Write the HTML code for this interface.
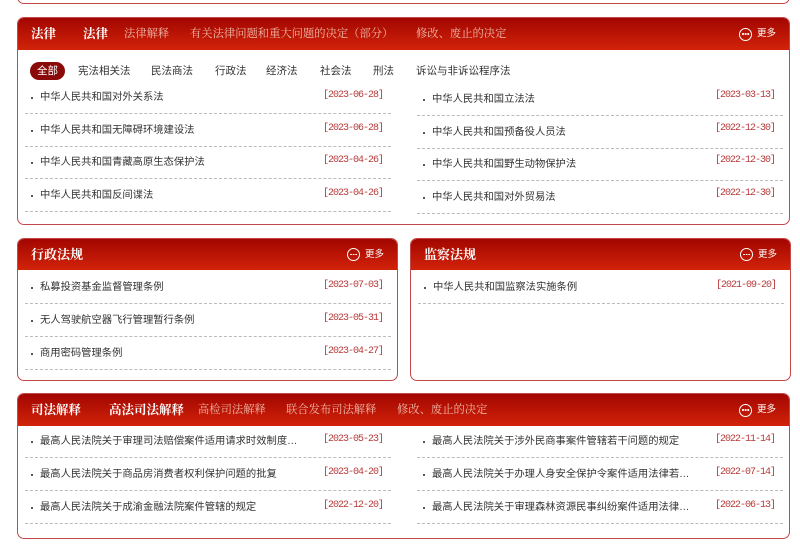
<!DOCTYPE html>
<html><head><meta charset="utf-8"><style>
*{margin:0;padding:0;box-sizing:border-box}
body{width:800px;height:547px;background:#fff;position:relative;overflow:hidden;font-family:"Liberation Sans","Noto Sans CJK SC",sans-serif;font-size:10.3px;color:#333}
.p{position:absolute;border:1px solid #c4484a;border-radius:7px;overflow:hidden;background:#fff}
.h{position:absolute;left:0;right:0;top:0;background:linear-gradient(#a20600,#d2230a);color:#f0b8a8;font-family:"Liberation Serif","Noto Serif CJK SC",serif;font-size:11.3px;white-space:nowrap}
.h span{position:absolute}
.h b{position:absolute;color:#fff;font-weight:bold;font-size:12.5px}
.more{position:absolute;top:0;color:#fff;font-size:9.5px;font-family:"Liberation Sans","Noto Sans CJK SC",sans-serif;height:100%;display:flex;align-items:center}
.more i{display:inline-block;width:13px;height:13px;border:1.3px solid #fff;border-radius:50%;margin-right:5px;position:relative}
.more i:after{content:"";position:absolute;left:2px;top:4.5px;width:1.6px;height:1.6px;background:#fff;box-shadow:2.6px 0 #fff,5.2px 0 #fff;border-radius:50%}
.r{position:absolute;height:33px;border-bottom:1px dashed #bbb;line-height:32px;white-space:nowrap}
.r:before{content:"";position:absolute;left:6px;top:16px;width:2px;height:2px;background:#555}
.r .t{position:absolute;left:15px;top:1px;max-width:270px;overflow:hidden}
.r .d{position:absolute;right:8px;top:-1px;color:#b83a3a;font-family:"Liberation Mono",monospace;font-size:10px;letter-spacing:-1px}
.rr .d{top:-3px}
.tag{position:absolute;top:44px;height:18px;line-height:18px;font-size:10.5px;color:#333}
</style></head><body>
<div class="p" style="left:17px;top:-20px;width:773px;height:24px"></div>

<div class="p" style="left:17px;top:17px;width:773px;height:208px">
<div class="h" style="height:32px;line-height:32px">
<b style="left:13px">法律</b><b style="left:65px">法律</b><span style="left:106px">法律解释</span><span style="left:172px">有关法律问题和重大问题的决定（部分）</span><span style="left:398px">修改、废止的决定</span>
<div class="more" style="right:13px"><i></i>更多</div></div>
<div class="tag" style="left:12px;background:#8a0a0a;color:#fff;border-radius:9px;padding:0 7px">全部</div>
<div class="tag" style="left:60px">宪法相关法</div><div class="tag" style="left:133px">民法商法</div>
<div class="tag" style="left:197px">行政法</div><div class="tag" style="left:248px">经济法</div>
<div class="tag" style="left:302px">社会法</div><div class="tag" style="left:355px">刑法</div>
<div class="tag" style="left:398px">诉讼与非诉讼程序法</div>
<div class="r" style="left:7px;top:63px;width:366px"><span class="t">中华人民共和国对外关系法</span><span class="d">[2023-06-28]</span></div>
<div class="r" style="left:7px;top:96px;width:366px"><span class="t">中华人民共和国无障碍环境建设法</span><span class="d">[2023-06-28]</span></div>
<div class="r" style="left:7px;top:128px;width:366px"><span class="t">中华人民共和国青藏高原生态保护法</span><span class="d">[2023-04-26]</span></div>
<div class="r" style="left:7px;top:161px;width:366px"><span class="t">中华人民共和国反间谍法</span><span class="d">[2023-04-26]</span></div>
<div class="r rr" style="left:399px;top:65px;width:366px"><span class="t">中华人民共和国立法法</span><span class="d">[2023-03-13]</span></div>
<div class="r rr" style="left:399px;top:98px;width:366px"><span class="t">中华人民共和国预备役人员法</span><span class="d">[2022-12-30]</span></div>
<div class="r rr" style="left:399px;top:130px;width:366px"><span class="t">中华人民共和国野生动物保护法</span><span class="d">[2022-12-30]</span></div>
<div class="r rr" style="left:399px;top:163px;width:366px"><span class="t">中华人民共和国对外贸易法</span><span class="d">[2022-12-30]</span></div>
</div>

<div class="p" style="left:17px;top:238px;width:381px;height:143px">
<div class="h" style="height:31px;line-height:31px"><b style="left:13px;font-size:13px">行政法规</b><div class="more" style="right:13px"><i></i>更多</div></div>
<div class="r" style="left:7px;top:32px;width:366px"><span class="t">私募投资基金监督管理条例</span><span class="d">[2023-07-03]</span></div>
<div class="r" style="left:7px;top:65px;width:366px"><span class="t">无人驾驶航空器飞行管理暂行条例</span><span class="d">[2023-05-31]</span></div>
<div class="r" style="left:7px;top:98px;width:366px"><span class="t">商用密码管理条例</span><span class="d">[2023-04-27]</span></div>
</div>

<div class="p" style="left:410px;top:238px;width:381px;height:143px">
<div class="h" style="height:31px;line-height:31px"><b style="left:13px;font-size:13px">监察法规</b><div class="more" style="right:13px"><i></i>更多</div></div>
<div class="r" style="left:7px;top:32px;width:366px"><span class="t">中华人民共和国监察法实施条例</span><span class="d">[2021-09-20]</span></div>
</div>

<div class="p" style="left:17px;top:393px;width:773px;height:146px">
<div class="h" style="height:32px;line-height:32px">
<b style="left:13px">司法解释</b><b style="left:91px">高法司法解释</b><span style="left:180px">高检司法解释</span><span style="left:268px">联合发布司法解释</span><span style="left:379px">修改、废止的决定</span>
<div class="more" style="right:13px"><i></i>更多</div></div>
<div class="r" style="left:7px;top:31px;width:366px"><span class="t">最高人民法院关于审理司法赔偿案件适用请求时效制度…</span><span class="d">[2023-05-23]</span></div>
<div class="r" style="left:7px;top:64px;width:366px"><span class="t">最高人民法院关于商品房消费者权利保护问题的批复</span><span class="d">[2023-04-20]</span></div>
<div class="r" style="left:7px;top:97px;width:366px"><span class="t">最高人民法院关于成渝金融法院案件管辖的规定</span><span class="d">[2022-12-20]</span></div>
<div class="r" style="left:399px;top:31px;width:366px"><span class="t">最高人民法院关于涉外民商事案件管辖若干问题的规定</span><span class="d">[2022-11-14]</span></div>
<div class="r" style="left:399px;top:64px;width:366px"><span class="t">最高人民法院关于办理人身安全保护令案件适用法律若…</span><span class="d">[2022-07-14]</span></div>
<div class="r" style="left:399px;top:97px;width:366px"><span class="t">最高人民法院关于审理森林资源民事纠纷案件适用法律…</span><span class="d">[2022-06-13]</span></div>
</div>
</body></html>
